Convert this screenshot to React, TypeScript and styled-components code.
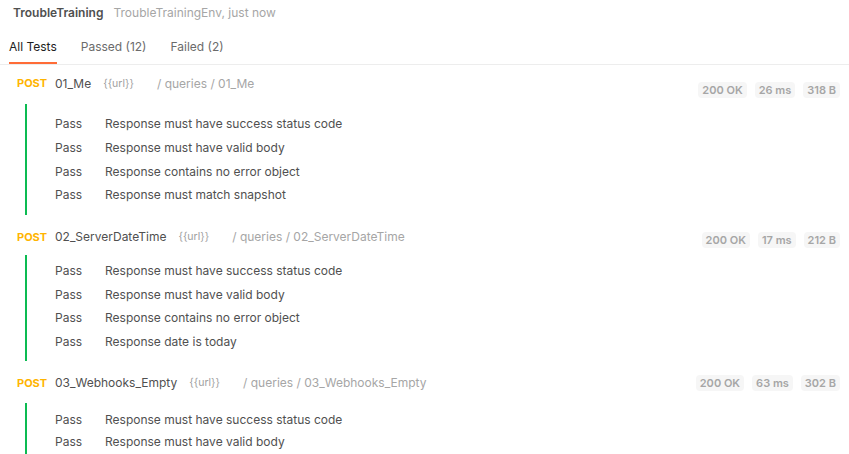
import React from "react";
import styled, { createGlobalStyle } from "styled-components";

const Global = createGlobalStyle`
  html, body { margin: 0; padding: 0; background: #ffffff; }
  body { font-family: Inter, "Noto Sans", sans-serif; color: #505050; }
  * { box-sizing: border-box; }
`;

const Page = styled.div`
  width: 849px;
  height: 454px;
  overflow: hidden;
  background: #fff;
`;

const TitleBar = styled.div`
  display: flex;
  align-items: center;
  gap: 10px;
  height: 30px;
  padding: 0 0 4px 13px;
  font-size: 12px;
  line-height: 18px;
`;

const RunName = styled.span`
  font-weight: 600;
  color: #505050;
`;

const RunMeta = styled.span`
  color: #a6a6a6;
`;

const Tabs = styled.div`
  display: flex;
  gap: 24px;
  height: 35px;
  padding-left: 9px;
  border-bottom: 1px solid #ededed;
`;

const Tab = styled.div<{ $active?: boolean }>`
  display: flex;
  align-items: center;
  height: 34px;
  font-size: 12px;
  color: ${(p) => (p.$active ? "#212121" : "#6b6b6b")};
  border-bottom: 2px solid ${(p) => (p.$active ? "#ff6c37" : "transparent")};
`;

const Group = styled.section`
  display: flex;
  flex-direction: column;
  margin-bottom: 4px;
`;

const Header = styled.div`
  display: flex;
  align-items: center;
  height: 36px;
  padding: 0 9px 0 17px;
  font-size: 12px;
`;

const Method = styled.span`
  width: 38px;
  font-size: 11px;
  font-weight: 700;
  color: #ffb400;
`;

const ReqName = styled.span`
  color: #505050;
  margin-right: 12px;
`;

const Url = styled.span`
  font-size: 10.5px;
  color: #a0a0a0;
  margin-right: 23px;
`;

const Path = styled.span`
  color: #a6a6a6;
  flex: 1;
`;

const Badges = styled.div<{ $shift: number }>`
  display: flex;
  gap: 8px;
  transform: translateY(${(p) => p.$shift}px);
`;

const Badge = styled.span`
  height: 16px;
  line-height: 16px;
  padding: 0 4px;
  border-radius: 4px;
  background: #f6f6f6;
  color: #a6a6a6;
  font-size: 11px;
  font-weight: 600;
`;

const Body = styled.div<{ $lead: number; $padTop: number; $padBottom: number }>`
  margin: ${(p) => p.$lead}px 0 0 25px;
  padding: ${(p) => p.$padTop}px 0 ${(p) => p.$padBottom}px 28px;
  border-left: 2px solid #0cbb52;
`;

const Row = styled.div<{ $h: number }>`
  display: flex;
  align-items: center;
  height: ${(p) => p.$h}px;
  font-size: 12px;
  color: #505050;
`;

const Status = styled.span`
  width: 50px;
`;

type Req = {
  name: string;
  status: string;
  time: string;
  size: string;
  shift: number;
  lead: number;
  padTop: number;
  padBottom: number;
  rowH: number;
  tests: string[];
};

const requests: Req[] = [
  {
    name: "01_Me",
    status: "200 OK",
    time: "26 ms",
    size: "318 B",
    shift: 7,
    lead: 3,
    padTop: 8,
    padBottom: 8,
    rowH: 23.7,
    tests: [
      "Response must have success status code",
      "Response must have valid body",
      "Response contains no error object",
      "Response must match snapshot",
    ],
  },
  {
    name: "02_ServerDateTime",
    status: "200 OK",
    time: "17 ms",
    size: "212 B",
    shift: 3,
    lead: 0,
    padTop: 4,
    padBottom: 7,
    rowH: 23.7,
    tests: [
      "Response must have success status code",
      "Response must have valid body",
      "Response contains no error object",
      "Response date is today",
    ],
  },
  {
    name: "03_Webhooks_Empty",
    status: "200 OK",
    time: "63 ms",
    size: "302 B",
    shift: 0,
    lead: 2,
    padTop: 6,
    padBottom: 10,
    rowH: 22,
    tests: [
      "Response must have success status code",
      "Response must have valid body",
    ],
  },
];

export default function App() {
  return (
    <Page>
      <Global />
      <TitleBar>
        <RunName>TroubleTraining</RunName>
        <RunMeta>TroubleTrainingEnv, just now</RunMeta>
      </TitleBar>
      <Tabs>
        <Tab $active>All Tests</Tab>
        <Tab>Passed (12)</Tab>
        <Tab>Failed (2)</Tab>
      </Tabs>
      {requests.map((r) => (
        <Group key={r.name}>
          <Header>
            <Method>POST</Method>
            <ReqName>{r.name}</ReqName>
            <Url>{"{{url}}"}</Url>
            <Path>/ queries / {r.name}</Path>
            <Badges $shift={r.shift}>
              <Badge>{r.status}</Badge>
              <Badge>{r.time}</Badge>
              <Badge>{r.size}</Badge>
            </Badges>
          </Header>
          <Body $lead={r.lead} $padTop={r.padTop} $padBottom={r.padBottom}>
            {r.tests.map((t) => (
              <Row key={t} $h={r.rowH}>
                <Status>Pass</Status>
                <span>{t}</span>
              </Row>
            ))}
          </Body>
        </Group>
      ))}
    </Page>
  );
}
